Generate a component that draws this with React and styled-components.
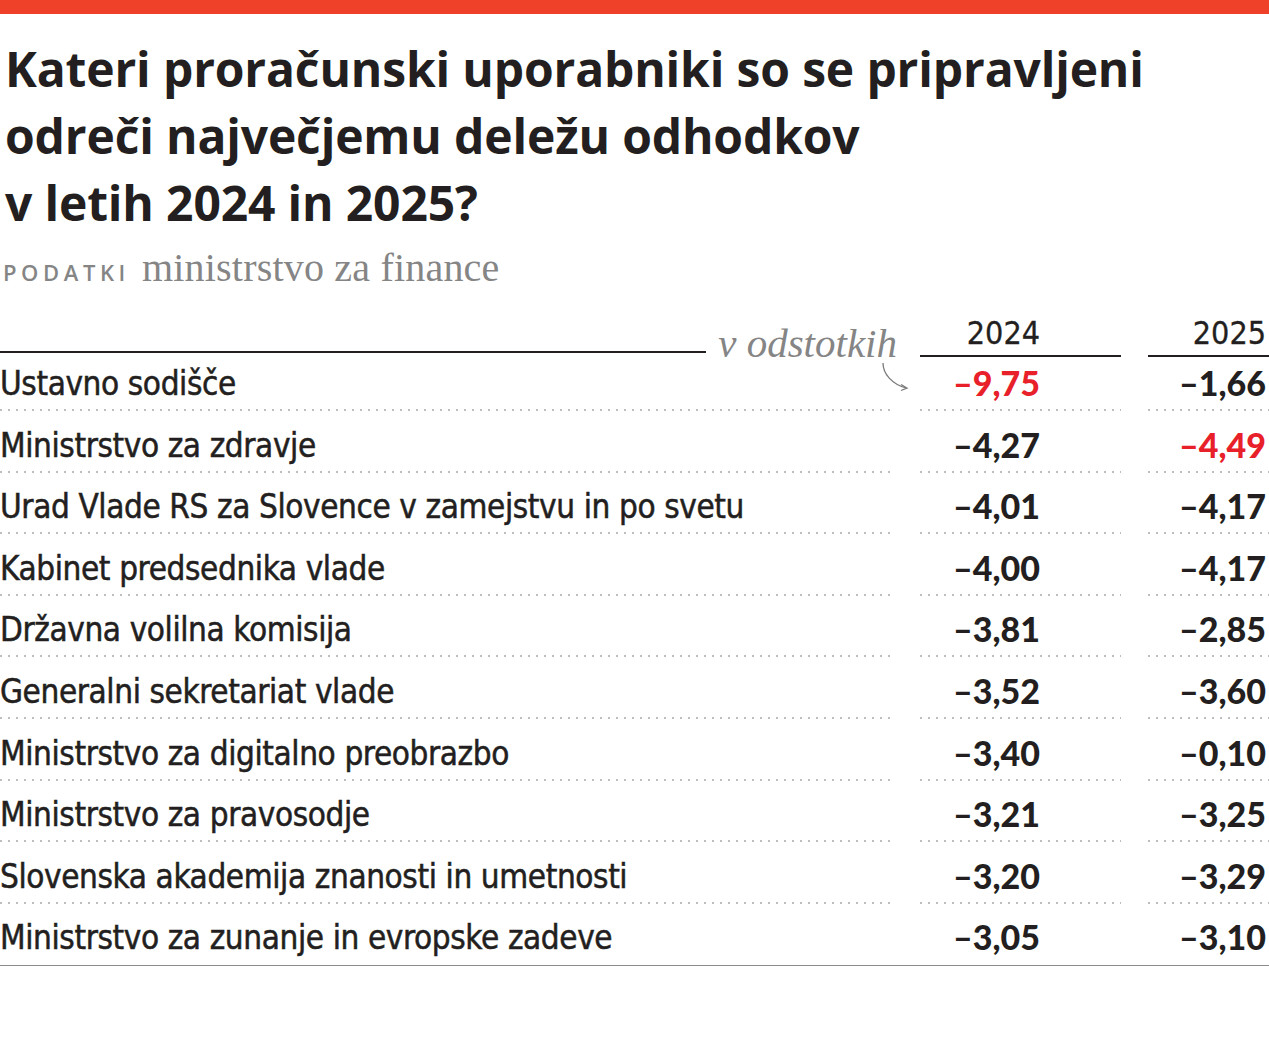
import React from "react";
import styled, { createGlobalStyle } from "styled-components";

const GlobalStyle = createGlobalStyle`
  html, body {
    margin: 0;
    padding: 0;
    background: #fff;
  }
  body {
    font-family: "Open Sans", "Liberation Sans", sans-serif;
    color: #231f20;
  }
`;

const condensed = `"Liberation Sans Narrow", "DejaVu Sans Condensed", "Liberation Sans", sans-serif`;

const Page = styled.div`
  width: 1269px;
  min-height: 1049px;
  background: #fff;
`;

const TopBar = styled.div`
  height: 14px;
  background: #ef4129;
`;

const Title = styled.h1`
  margin: 0;
  padding: 21px 0 0 5px;
  font-family: "Open Sans", "Liberation Sans", sans-serif;
  font-weight: 700;
  font-size: 48px;
  line-height: 67px;
  color: #231f20;
  letter-spacing: -0.15px;
`;

const Source = styled.div`
  display: flex;
  align-items: baseline;
  gap: 12px;
  padding: 12px 0 0 3px;
  line-height: 40px;
  color: #858585;
`;

const SourceLabel = styled.span`
  font-family: "Open Sans", "Liberation Sans", sans-serif;
  font-weight: 600;
  font-size: 22px;
  letter-spacing: 4.6px;
`;

const SourceName = styled.span`
  font-family: "Liberation Serif", serif;
  font-size: 40px;
  letter-spacing: 0.2px;
`;

const Table = styled.div`
  position: relative;
  display: grid;
  grid-template-columns: 893px 201px 1fr;
  grid-template-rows: 45.5px repeat(10, 61.6px);
  column-gap: 27px;
  margin-top: 12px;
  border-bottom: 1.5px solid #8c8c8c;
`;

const HeadLabel = styled.div`
  display: flex;
  align-items: flex-end;
  height: 53px;
  box-sizing: border-box;
  padding-bottom: 4px;
`;

const HeadRule = styled.div`
  flex: 1;
  height: 2px;
  background: #231f20;
  margin-right: 12px;
`;

const Unit = styled.span`
  font-family: "Liberation Serif", serif;
  font-style: italic;
  font-size: 41px;
  line-height: 1;
  color: #858585;
  margin-right: -4px;
  margin-bottom: -11px;
  white-space: nowrap;
`;

const YearHead = styled.div`
  display: flex;
  align-items: flex-end;
  justify-content: flex-end;
  padding-right: ${(p) => p.$pad}px;
  padding-bottom: 6px;
  box-sizing: border-box;
  height: 53px;
  position: relative;
  z-index: 1;
  border-bottom: 2px solid #231f20;
  font-family: ${condensed};
  font-size: 32px;
  line-height: 1;
  -webkit-text-stroke: 0.3px #231f20;
`;

const dots = `
  background-image: linear-gradient(to right, #bdbdbd 0 2px, transparent 2px);
  background-size: 8px 2px;
  background-repeat: repeat-x;
  background-position: 0 100%;
`;

const Cell = styled.div`
  height: 61.6px;
  box-sizing: border-box;
  display: flex;
  align-items: flex-end;
  padding-bottom: 11px;
  ${(p) => (p.$last ? "" : dots)}
`;

const Name = styled(Cell)`
  font-family: ${condensed};
  font-size: 33px;
  letter-spacing: -0.4px;
  line-height: 1;
  white-space: nowrap;
  -webkit-text-stroke: 0.5px #231f20;
`;

const Value = styled(Cell)`
  justify-content: flex-end;
  padding-right: ${(p) => p.$pad}px;
  font-family: "Lato", "Liberation Sans", sans-serif;
  font-weight: 900;
  font-size: 34px;
  line-height: 1;
  color: ${(p) => (p.$hi ? "#e8202a" : "#231f20")};
`;

const Pointer = styled.svg`
  position: absolute;
  left: 878px;
  top: 58px;
  overflow: visible;
`;

const rows = [
  { name: "Ustavno sodišče", a: "–9,75", b: "–1,66", hiA: true },
  { name: "Ministrstvo za zdravje", a: "–4,27", b: "–4,49", hiB: true },
  { name: "Urad Vlade RS za Slovence v zamejstvu in po svetu", a: "–4,01", b: "–4,17" },
  { name: "Kabinet predsednika vlade", a: "–4,00", b: "–4,17" },
  { name: "Državna volilna komisija", a: "–3,81", b: "–2,85" },
  { name: "Generalni sekretariat vlade", a: "–3,52", b: "–3,60" },
  { name: "Ministrstvo za digitalno preobrazbo", a: "–3,40", b: "–0,10" },
  { name: "Ministrstvo za pravosodje", a: "–3,21", b: "–3,25" },
  { name: "Slovenska akademija znanosti in umetnosti", a: "–3,20", b: "–3,29" },
  { name: "Ministrstvo za zunanje in evropske zadeve", a: "–3,05", b: "–3,10" },
];

export default function App() {
  return (
    <Page>
      <GlobalStyle />
      <TopBar />
      <Title>
        Kateri proračunski uporabniki so se pripravljeni
        <br />
        odreči največjemu deležu odhodkov
        <br />v letih 2024 in 2025?
      </Title>
      <Source>
        <SourceLabel>PODATKI</SourceLabel>
        <SourceName>ministrstvo za finance</SourceName>
      </Source>

      <Table>
        <HeadLabel>
          <HeadRule />
          <Unit>v odstotkih</Unit>
        </HeadLabel>
        <YearHead $pad={81}>2024</YearHead>
        <YearHead $pad={3}>2025</YearHead>

        {rows.map((r, i) => {
          const last = i === rows.length - 1;
          return (
            <React.Fragment key={r.name}>
              <Name $last={last}>{r.name}</Name>
              <Value $last={last} $pad={81} $hi={r.hiA}>
                {r.a}
              </Value>
              <Value $last={last} $pad={3} $hi={r.hiB}>
                {r.b}
              </Value>
            </React.Fragment>
          );
        })}

        <Pointer width="40" height="40" viewBox="0 0 40 40">
          <path d="M5 1 C5 12 14 22 28 26" fill="none" stroke="#7a7a7a" strokeWidth="1.3" />
          <path d="M23 22.5 L29 26.2 L23 28.5" fill="none" stroke="#7a7a7a" strokeWidth="1.3" />
        </Pointer>
      </Table>
    </Page>
  );
}
